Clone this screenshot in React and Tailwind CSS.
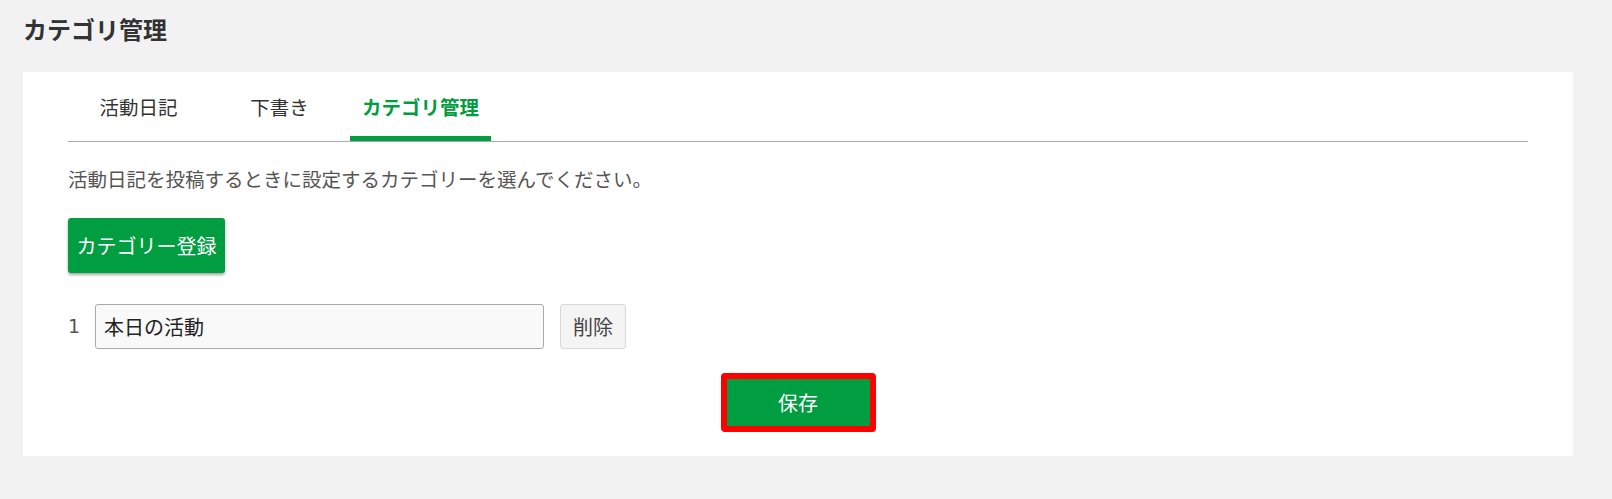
import React, { useState } from "react";

const TABS = ["活動日記", "下書き", "カテゴリ管理"];

export default function App() {
  const [active, setActive] = useState(2);
  const [name, setName] = useState("本日の活動");

  return (
    <div className="min-h-[499px] bg-[#f2f2f2] font-['Noto_Sans_CJK_JP',sans-serif] text-[#333]">
      <div className="h-[72px] pl-[23px] pt-[12px]">
        <h1 className="text-[24px] font-bold leading-[34px] text-[#333]">カテゴリ管理</h1>
      </div>

      <div className="ml-[23px] w-[1550px] bg-white px-[45px] pb-[24px]">
        <ul className="flex border-b border-[#aaa]">
          {TABS.map((t, i) => (
            <li
              key={t}
              onClick={() => setActive(i)}
              className={
                i === active
                  ? "flex h-[69px] w-[141px] cursor-pointer items-center justify-center border-b-[5px] border-[#009e40] pt-[5px] text-[19.5px] font-bold text-[#009e40]"
                  : "flex h-[69px] w-[141px] cursor-pointer items-center justify-center border-b-[5px] border-transparent pt-[5px] text-[19.5px] text-[#333]"
              }
            >
              {t}
            </li>
          ))}
        </ul>

        <p className="mt-[23px] text-[19.5px] leading-[28px] text-[#555]">
          活動日記を投稿するときに設定するカテゴリーを選んでください。
        </p>

        <button className="mt-[25px] flex h-[55px] w-[157px] items-center justify-center rounded-[3px] bg-[#009e40] text-[20px] text-white shadow-[0_2px_3px_rgba(0,0,0,0.35)]">
          カテゴリー登録
        </button>

        <div className="mt-[31px] flex items-center">
          <span className="w-[27px] font-['DejaVu_Sans',sans-serif] text-[19px] text-[#555]">1</span>
          <input
            value={name}
            onChange={(e) => setName(e.target.value)}
            className="h-[45px] w-[449px] rounded-[3px] border border-[#aaa] bg-[#f9f9f9] pl-[8px] text-[20px] text-[#222] outline-none"
          />
          <button className="ml-[16px] h-[45px] w-[66px] rounded-[3px] border border-[#d9d9d9] bg-[#f4f4f4] text-[20px] text-[#444]">
            削除
          </button>
        </div>

        <div className="mt-[24px] flex justify-center">
          <div className="rounded-[4px] border-[6px] border-[#ff0000]">
            <button className="flex h-[47px] w-[143px] items-center justify-center bg-[#009e40] text-[20px] text-white">
              保存
            </button>
          </div>
        </div>
      </div>
    </div>
  );
}
